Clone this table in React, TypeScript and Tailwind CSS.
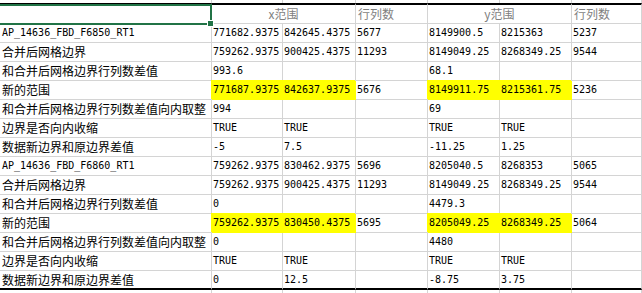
import React from "react";

type Cell = { t: string; y?: boolean };

const rows: Cell[][] = [
  [{ t: "AP_14636_FBD_F6850_RT1" }, { t: "771682.9375" }, { t: "842645.4375" }, { t: "5677" }, { t: "8149900.5" }, { t: "8215363" }, { t: "5237" }],
  [{ t: "合并后网格边界" }, { t: "759262.9375" }, { t: "900425.4375" }, { t: "11293" }, { t: "8149049.25" }, { t: "8268349.25" }, { t: "9544" }],
  [{ t: "和合并后网格边界行列数差值" }, { t: "993.6" }, { t: "" }, { t: "" }, { t: "68.1" }, { t: "" }, { t: "" }],
  [{ t: "新的范围" }, { t: "771687.9375", y: true }, { t: "842637.9375", y: true }, { t: "5676" }, { t: "8149911.75", y: true }, { t: "8215361.75", y: true }, { t: "5236" }],
  [{ t: "和合并后网格边界行列数差值向内取整" }, { t: "994" }, { t: "" }, { t: "" }, { t: "69" }, { t: "" }, { t: "" }],
  [{ t: "边界是否向内收缩" }, { t: "TRUE" }, { t: "TRUE" }, { t: "" }, { t: "TRUE" }, { t: "TRUE" }, { t: "" }],
  [{ t: "数据新边界和原边界差值" }, { t: "-5" }, { t: "7.5" }, { t: "" }, { t: "-11.25" }, { t: "1.25" }, { t: "" }],
  [{ t: "AP_14636_FBD_F6860_RT1" }, { t: "759262.9375" }, { t: "830462.9375" }, { t: "5696" }, { t: "8205040.5" }, { t: "8268353" }, { t: "5065" }],
  [{ t: "合并后网格边界" }, { t: "759262.9375" }, { t: "900425.4375" }, { t: "11293" }, { t: "8149049.25" }, { t: "8268349.25" }, { t: "9544" }],
  [{ t: "和合并后网格边界行列数差值" }, { t: "0" }, { t: "" }, { t: "" }, { t: "4479.3" }, { t: "" }, { t: "" }],
  [{ t: "新的范围" }, { t: "759262.9375", y: true }, { t: "830450.4375", y: true }, { t: "5695" }, { t: "8205049.25", y: true }, { t: "8268349.25", y: true }, { t: "5064" }],
  [{ t: "和合并后网格边界行列数差值向内取整" }, { t: "0" }, { t: "" }, { t: "" }, { t: "4480" }, { t: "" }, { t: "" }],
  [{ t: "边界是否向内收缩" }, { t: "TRUE" }, { t: "TRUE" }, { t: "" }, { t: "TRUE" }, { t: "TRUE" }, { t: "" }],
  [{ t: "数据新边界和原边界差值" }, { t: "0" }, { t: "12.5" }, { t: "" }, { t: "-8.75" }, { t: "3.75" }, { t: "" }],
];

const isCJK = (s: string) => /[\u4e00-\u9fff]/.test(s);

function DataCell({ c, col, last }: { c: Cell; col: number; last: boolean }) {
  const font = isCJK(c.t)
    ? "font-['Noto_Sans_CJK_SC',sans-serif] text-[12px]"
    : "font-['DejaVu_Sans_Mono',monospace] text-[10px]";
  const pad = col === 0 ? "pl-[2px]" : "pl-px";
  const fill = c.y
    ? "bg-[#ffff00] border-r-[#ffff00] shadow-[-1px_-1px_0_0_#ffff00]"
    : "border-r-[#d4d4d4]";
  const bottom = last
    ? "border-b-2 border-b-black"
    : c.y
    ? "border-b border-b-[#ffff00]"
    : "border-b border-b-[#d4d4d4]";
  return (
    <div
      className={`h-[19px] flex items-center border-r overflow-hidden whitespace-nowrap leading-none text-black ${font} ${pad} ${fill} ${bottom}`}
    >
      {c.t}
    </div>
  );
}

export default function App() {
  const spacer = (
    <>
      {[0, 1, 2, 3, 4, 5, 6].map((i) => (
        <div key={i} className="h-[3px] border-r border-r-[#d4d4d4]" />
      ))}
    </>
  );
  const hdr =
    "h-[21px] flex items-center border-t-2 border-t-black border-b border-b-[#d4d4d4] border-r border-r-[#d4d4d4] font-['Noto_Sans_CJK_SC',sans-serif] text-[12px] leading-none text-[#7f7f7f] whitespace-nowrap";
  return (
    <div className="relative w-[642px] h-[293px] overflow-hidden bg-white">
      <div className="grid grid-cols-[212px_71px_73px_72px_72px_72px_70px]">
        {spacer}
        <div className={hdr} />
        <div className={`${hdr} col-span-2 justify-center`}>x范围</div>
        <div className={`${hdr} pl-[2px]`}>行列数</div>
        <div className={`${hdr} col-span-2 justify-center`}>y范围</div>
        <div className={`${hdr} pl-[2px]`}>行列数</div>
        {rows.map((r, ri) =>
          r.map((c, ci) => (
            <DataCell key={`${ri}-${ci}`} c={c} col={ci} last={ri === rows.length - 1} />
          ))
        )}
        {spacer}
      </div>
      <div className="absolute left-[-3px] top-[4px] w-[215px] h-[21px] border-2 border-[#217346]" />
      <div className="absolute left-[207px] top-[20px] w-[7px] h-[7px] bg-[#217346] border border-white" />
    </div>
  );
}
